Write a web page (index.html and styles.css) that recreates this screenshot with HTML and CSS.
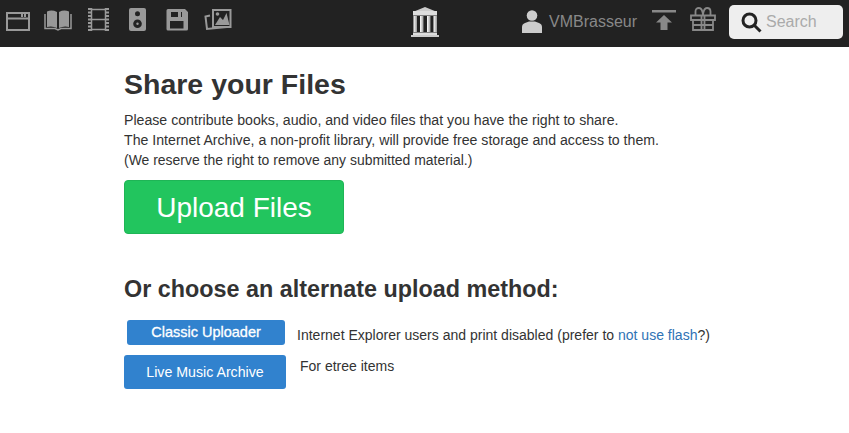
FILE: index.html
```html
<!DOCTYPE html>
<html lang="en">
<head>
<meta charset="utf-8">
<title>Share your Files</title>
<link rel="stylesheet" href="styles.css">
</head>
<body>
<nav class="topbar">
  <div class="media-icons">
    <svg class="cell" viewBox="0 0 40 47"><path class="line" d="M7 13h22v17H7zM7 18.500h22"/><path class="fill" d="M21 14h2v3h-2zM24 14h2v3h-2z"/></svg>
    <svg class="cell" viewBox="0 0 40 47"><path class="fill" d="M7 11.500q5-2 10 .5v16q-5-2.500-10-1zM19 12q5-2.500 10-.5V27q-5-1.500-10 1z"/><path class="line-thin" d="M5 14v14.500h10l3 1.500 3-1.500h10V14"/></svg>
    <svg class="cell" viewBox="0 0 40 47"><path class="line-thin" d="M11.500 8v23M25.500 8v23M11.500 9.500h14M11.500 19.500h14M11.500 29.500h14"/><path class="line-dash" d="M9.500 8v23M27.500 8v23"/></svg>
    <svg class="cell" viewBox="0 0 40 47"><rect class="fill" x="9" y="8" width="17" height="23" rx="2"/><circle class="hole" cx="17.500" cy="13.700" r="2.500"/><circle class="hole" cx="17.500" cy="23.700" r="4.300"/><circle class="fill" cx="17.500" cy="23.700" r="1.200"/></svg>
    <svg class="cell" viewBox="0 0 40 47"><path class="fill" fill-rule="evenodd" d="M8 9h17l3 3v17a1.500 1.500 0 0 1-1.500 1.500H8A1.500 1.500 0 0 1 6.500 29V10.500A1.500 1.500 0 0 1 8 9zm3 3v5h11v-5zM10 21v7.500h13.500V21z"/><path class="fill" d="M18 12h3v5h-3z"/></svg>
    <svg class="cell" viewBox="0 0 40 47"><path class="line" d="M13 10h17.500v17H13z"/><path class="fill" d="M15 25l5-8 3 3 3.500-7 3 12z"/><circle class="fill" cx="17.500" cy="14" r="1.800"/><path class="line" d="M10 15.500l-4.500 1L7 29l20-2"/></svg>
  </div>
  <svg class="temple" viewBox="0 0 28 30"><defs><linearGradient id="col"><stop offset="0" stop-color="#fff"/><stop offset="1" stop-color="#999"/></linearGradient></defs><path class="t1" d="M3 4.500L14 0l11 4.500z"/><path class="t2" d="M2 4h24v4.500H2z"/><path fill="url(#col)" d="M2.500 9h3.500v16H2.500z"/><path fill="url(#col)" d="M9 9h3.500v16H9z"/><path fill="url(#col)" d="M16 9h3.500v16H16z"/><path fill="url(#col)" d="M22.500 9H26v16h-3.500z"/><path class="t2" d="M2 25.500h24V28H2z"/><path class="t1" d="M0 28h28v2H0z"/></svg>
  <div class="user-tools">
    <svg class="user-icon" viewBox="0 0 20 23"><circle cx="10" cy="5.500" r="5.300"/><path d="M0 23v-6q0-3 3-4l4-1.500h6l4 1.500q3 1 3 4v6z"/></svg>
    <span class="username">VMBrasseur</span>
    <svg class="upload-icon" viewBox="0 0 24 20"><path d="M0 0h24v2.500H0zM12 5l8 7.500h-4.500V20h-7v-7.500H4z"/></svg>
    <svg class="gift-icon" viewBox="0 0 26 24"><path class="gift" d="M1 8.500h24v4.500H1zM3 13h20v10H3zM11.500 8.500V23M14.500 8.500V23M3 18h20M5.500 8.500V4.500Q5.500 1 9 1q3.500 0 4 7.500Q13.500 1 17 1q3.500 0 3.500 3.500v4"/></svg>
    <div class="search">
      <svg class="search-icon" viewBox="0 0 21 21"><circle cx="8.500" cy="8.500" r="6.500"/><path d="M13.500 13.500l6 6"/></svg>
      <span class="search-text">Search</span>
    </div>
  </div>
</nav>
<main class="content">
  <h1 class="title">Share your Files</h1>
  <p class="intro">Please contribute books, audio, and video files that you have the right to share.<br>The Internet Archive, a non-profit library, will provide free storage and access to them.<br><span class="reserve">(We reserve the right to remove any submitted material.)</span></p>
  <a class="btn-upload" href="#">Upload Files</a>
  <h2 class="subtitle">Or choose an alternate upload method:</h2>
  <div class="method method-classic">
    <a class="btn-classic" href="#">Classic Uploader</a>
    <span class="note-classic">Internet Explorer users and print disabled (prefer to <a class="link" href="#">not use flash</a>?)</span>
  </div>
  <div class="method method-live">
    <a class="btn-live" href="#">Live Music Archive</a>
    <span class="note-live">For etree items</span>
  </div>
</main>
</body>
</html>
```
FILE: styles.css
```css
* { box-sizing: border-box; }
body { margin: 0; background: #fff; color: #333; font-family: "Liberation Sans", Arial, sans-serif; font-size: 14px; line-height: 20px; }
a { text-decoration: none; }

.topbar { height: 47px; background: #222; display: grid; grid-template-columns: 1fr auto 1fr; align-items: start; }
.media-icons { display: flex; }
.cell { width: 40px; height: 47px; display: block; flex: none; }
.line { fill: none; stroke: #999; stroke-width: 2; }
.line-thin { fill: none; stroke: #999; stroke-width: 1.500; }
.line-dash { fill: none; stroke: #999; stroke-width: 3; stroke-dasharray: 2 1.500; }
.fill { fill: #999; }
.hole { fill: #222; }

.temple { width: 28px; height: 30px; margin-top: 7px; display: block; }
.t1 { fill: #ccc; }
.t2 { fill: #ddd; }

.user-tools { display: flex; align-items: flex-start; justify-self: end; padding-right: 6px; }
.user-icon { width: 20px; height: 23px; margin-top: 10px; fill: #ccc; display: block; }
.username { margin: 12px 0 0 7px; color: #888; font-size: 16px; line-height: 20px; width: 88px; }
.upload-icon { width: 24px; height: 20px; margin: 10px 0 0 15px; fill: #888; display: block; }
.gift-icon { width: 26px; height: 24px; margin: 7px 0 0 14px; display: block; }
.gift { fill: none; stroke: #888; stroke-width: 1.800; }
.search { width: 114px; height: 34px; margin: 5px 0 0 13px; background: #eee; border-radius: 5px; display: flex; align-items: center; padding-left: 12px; }
.search-icon { width: 21px; height: 21px; display: block; fill: none; stroke: #222; stroke-width: 3; }
.search-text { margin-left: 4px; color: #aaa; font-size: 16px; }

.content { padding-left: 124px; }
.title { margin: 20px 0 0; font-size: 28.500px; line-height: 34px; font-weight: bold; }
.intro { margin: 9px 0 0; font-size: 14.150px; }
.reserve { font-size: 13.950px; }
.btn-upload { display: block; width: 220px; height: 54px; margin-top: 10px; background: #22c55e; border: 1px solid #1fb556; border-radius: 4px; color: #fff; font-size: 28px; line-height: 53px; text-align: center; }
.subtitle { margin: 40px 0 0; font-size: 23.350px; line-height: 30px; font-weight: bold; }
.method { display: flex; align-items: flex-start; }
.method-classic { margin-top: 16px; padding-left: 3px; }
.method-live { margin-top: 10px; }
.btn-classic { width: 158px; height: 25px; background: #3182ce; border-radius: 3px; color: #fff; font-size: 14.500px; -webkit-text-stroke: 0.3px #fff; line-height: 24px; text-align: center; }
.note-classic { margin: 5px 0 0 12px; font-size: 14.030px; }
.link { color: #2f73b5; }
.btn-live { width: 162px; height: 34px; background: #3182ce; border-radius: 3px; color: #fff; font-size: 14.200px; line-height: 34px; text-align: center; }
.note-live { margin: 1px 0 0 14px; }
```
